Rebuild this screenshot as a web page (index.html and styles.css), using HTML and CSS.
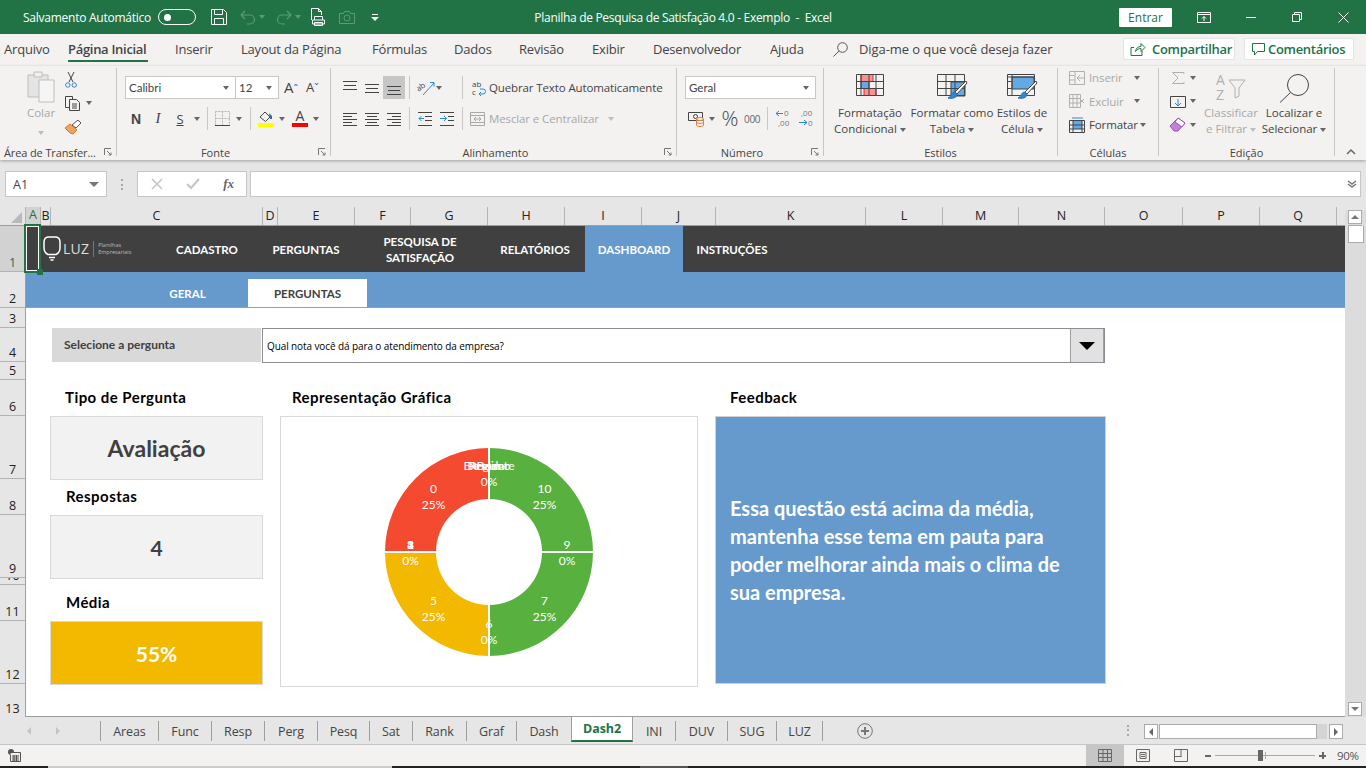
FILE: index.html
```html
<!DOCTYPE html>
<html lang="pt-BR">
<head>
<meta charset="utf-8">
<title>Planilha de Pesquisa de Satisfação 4.0 - Exemplo - Excel</title>
<link rel="stylesheet" href="styles.css">
</head>
<body>
<div class="app">

<header class="titlebar">
  <div class="qat">
    <span class="autosave">Salvamento Automático</span>
    <span class="toggle"><span class="toggle-dot"></span></span>
    <svg class="i qat-save" width="16" height="16" viewBox="0 0 16 16" fill="none" stroke="#fff"><path d="M.5.5h12l3 3v12H.5z"/><path d="M3.5.5v5h8v-5M3.5 15.5v-6h9v6"/></svg>
    <svg class="i qat-undo" width="16" height="16" viewBox="0 0 16 16" fill="none" stroke="#5c9a78" stroke-width="1.2"><path d="M1 6h9a4.5 4.5 0 0 1 0 9H7M1 6l4-4M1 6l4 4"/></svg>
    <span class="caret caret-dim qat-c1"></span>
    <svg class="i qat-redo" width="16" height="16" viewBox="0 0 16 16" fill="none" stroke="#5c9a78" stroke-width="1.2"><path d="M15 6H6a4.5 4.5 0 0 0 0 9h3M15 6l-4-4M15 6l-4 4"/></svg>
    <span class="caret caret-dim qat-c2"></span>
    <svg class="i qat-print" width="15" height="18" viewBox="0 0 15 18" fill="none" stroke="#fff"><path d="M.5 12V.5h7l3 3V7M7.5.5v3h3"/><path d="M3.5 12V8.500h8V12M1.500 12h12v4h-12zM3.500 14.500h8v3h-8z" fill="#217346"/></svg>
    <svg class="i qat-cam" width="16" height="13" viewBox="0 0 16 13" fill="none" stroke="#5c9a78"><path d="M.5 2.500h4l1-2h5l1 2h4v10H.5z"/><circle cx="8" cy="7" r="3"/></svg>
    <svg class="i qat-more" width="8" height="7" viewBox="0 0 8 7" fill="#fff"><path d="M1 0h6v1H1zM0 3h8L4 7z"/></svg>
  </div>
  <div class="doc-title">Planilha de Pesquisa de Satisfação 4.0 - Exemplo&nbsp; -&nbsp; Excel</div>
  <div class="win">
    <span class="signin">Entrar</span>
    <svg class="i win-opts" width="14" height="11" viewBox="0 0 14 11" fill="none" stroke="#fff"><path d="M.5.500h13v10H.5zM.5 2.500h13M7 9V4.500M5 6.500l2-2 2 2"/></svg>
    <svg class="i win-min" width="10" height="1" viewBox="0 0 10 1"><path d="M0 0h10v1H0z" fill="#fff"/></svg>
    <svg class="i win-max" width="10" height="10" viewBox="0 0 10 10" fill="none" stroke="#fff"><path d="M.5 2.500h7v7h-7zM2.500 2.500v-2h7v7h-2"/></svg>
    <svg class="i win-close" width="11" height="11" viewBox="0 0 11 11" stroke="#fff"><path d="M.5.500l10 10M10.500.500l-10 10"/></svg>
  </div>
</header>

<nav class="tabstrip">
  <span class="rtab">Arquivo</span>
  <span class="rtab rtab-on">Página Inicial</span>
  <span class="rtab">Inserir</span>
  <span class="rtab">Layout da Página</span>
  <span class="rtab">Fórmulas</span>
  <span class="rtab">Dados</span>
  <span class="rtab">Revisão</span>
  <span class="rtab">Exibir</span>
  <span class="rtab">Desenvolvedor</span>
  <span class="rtab">Ajuda</span>
  <span class="tellme">
    <svg class="i" width="15" height="15" viewBox="0 0 15 15" fill="none" stroke="#555"><circle cx="9.500" cy="5.500" r="4.800"/><path d="M6 9L.5 14.500"/></svg>
    <span>Diga-me o que você deseja fazer</span>
  </span>
  <span class="share">
    <span class="sbtn sbtn-a"><svg class="i" width="16" height="14" viewBox="0 0 16 14" fill="none" stroke="#217346"><path d="M1 5.500v8h11V9M1 5.500h3M5.500 9.500C6 6 8 4.500 11 4.500V1.500l4 4-4 4v-3C8.500 6.500 7 7.500 5.500 9.500z"/></svg>Compartilhar</span>
    <span class="sbtn sbtn-b"><svg class="i" width="13" height="13" viewBox="0 0 13 13" fill="none" stroke="#217346"><path d="M.5.500h12v8H5.500l-3 3.500V8.500H.5z"/></svg>Comentários</span>
  </span>
</nav>

<section class="ribbon">
  <div class="grp g1">
    <div class="body flexrow">
      <div class="paste">
        <svg class="i" width="28" height="32" viewBox="0 0 28 32" fill="none"><path d="M1 4h20v22H1z" fill="#e4e4e4" stroke="#bdbdbd"/><path d="M7 1h8v5H7z" fill="#efefef" stroke="#bdbdbd"/><path d="M12 9h15v22H12z" fill="#f5f5f5" stroke="#bdbdbd"/></svg>
        <span class="dim">Colar</span>
        <span class="caret caret-lt"></span>
      </div>
      <div class="stack">
        <svg class="i" width="12" height="16" viewBox="0 0 12 16" fill="none" stroke="#444"><path d="M3 0l5 10M9 0L4 10"/><circle cx="2.800" cy="13" r="2.200" stroke="#2b88d8"/><circle cx="9.200" cy="13" r="2.200" stroke="#2b88d8"/></svg>
        <span class="hrow"><svg class="i" width="16" height="15" viewBox="0 0 16 15" fill="none" stroke="#444"><path d="M.5.500h7v11H.5z"/><path d="M4.500 3.500h7l3 3v8h-10z" fill="#f3f2f1"/><path d="M7 8h5M7 10h5M7 12h5"/></svg><span class="caret c-copy"></span></span>
        <svg class="i" width="17" height="16" viewBox="0 0 17 16"><path d="M0 9l5-4 7 6-4 4-3-1z" fill="#f0a45e" stroke="#d97a2a"/><path d="M7 6l6-5 3 3-5 5z" fill="#fff" stroke="#555"/></svg>
      </div>
    </div>
    <div class="label"><span class="label-left">Área de Transfer...</span><svg class="launch" width="8" height="8" viewBox="0 0 8 8" fill="none" stroke="#777"><path d="M.5 7V.5H7M3 3l4 4M7 4.500V7H4.500"/></svg></div>
  </div>

  <div class="grp g2">
    <div class="body rows">
      <div class="hrow">
        <span class="combo w110">Calibri<span class="caret"></span></span>
        <span class="combo w44">12<span class="caret"></span></span>
        <span class="glyph-a ml5">A<small>ˆ</small></span>
        <span class="glyph-a glyph-sm ml5">A<small>ˇ</small></span>
      </div>
      <div class="hrow">
        <span class="btn w22 b-n">N</span>
        <span class="btn w22 b-i">I</span>
        <span class="btn w22 b-s">S</span>
        <span class="btn w12"><span class="caret"></span></span>
        <span class="vsep ml4"></span>
        <svg class="i ml7" width="15" height="15" viewBox="0 0 15 15" fill="none" stroke="#b5b5b5" stroke-dasharray="2 1"><path d="M.5.500h14v14H.5zM7.500.500v14M.5 7.500h14"/><path d="M0 14.500h15" stroke="#444" stroke-dasharray="none"/></svg>
        <span class="btn w18"><span class="caret"></span></span>
        <span class="vsep ml2"></span>
        <svg class="i ml7" width="16" height="17" viewBox="0 0 16 17"><path d="M2 7l5-5 5 5-4.500 4.500z" fill="none" stroke="#444"/><path d="M11 3l3 3v3h-2z" fill="#2b6fb3"/><path d="M0 13h16v4H0z" fill="#ffff00"/></svg>
        <span class="btn w16"><span class="caret"></span></span>
        <span class="font-a ml2">A</span>
        <span class="btn w16"><span class="caret"></span></span>
      </div>
    </div>
    <div class="label"><span class="label-c">Fonte</span><svg class="launch" width="8" height="8" viewBox="0 0 8 8" fill="none" stroke="#777"><path d="M.5 7V.5H7M3 3l4 4M7 4.500V7H4.500"/></svg></div>
  </div>

  <div class="grp g3">
    <div class="body rows">
      <div class="hrow">
        <svg class="i al" width="14" height="14" viewBox="0 0 14 14" stroke="#444"><path d="M0 1.500h14M1 5.500h12M0 9.500h14" transform="translate(0 -1)"/></svg>
        <svg class="i al ml8" width="14" height="14" viewBox="0 0 14 14" stroke="#444"><path d="M0 3.500h14M1 7.500h12M0 11.500h14"/></svg>
        <span class="btn-on ml4"><svg class="i" width="14" height="14" viewBox="0 0 14 14" stroke="#444"><path d="M0 5.500h14M1 9.500h12M0 13.500h14"/></svg></span>
        <span class="vsep ml4"></span>
        <svg class="i ml7" width="18" height="16" viewBox="0 0 18 16" fill="none" stroke="#444"><text x="0" y="9" class="mini" transform="rotate(-35 5 8)">ab</text><path d="M6 15L17 3M13 2.500h4v4" stroke="#2b88d8"/></svg>
        <span class="btn w8"><span class="caret"></span></span>
        <span class="vsep ml19"></span>
        <svg class="i ml9" width="14" height="16" viewBox="0 0 14 16" fill="none" stroke="#2b88d8"><text x="0" y="7" class="mini">ab</text><text x="0" y="15" class="mini">c</text><path d="M7 14h4a2.500 2.500 0 0 0 0-5H8M7 14l2-2M7 14l2 2"/></svg>
        <span class="tx ml3">Quebrar Texto Automaticamente</span>
      </div>
      <div class="hrow">
        <svg class="i" width="14" height="14" viewBox="0 0 14 14" stroke="#444"><path d="M0 1.500h14M0 4.500h9M0 7.500h14M0 10.500h9M0 13.500h14"/></svg>
        <svg class="i ml8" width="14" height="14" viewBox="0 0 14 14" stroke="#444"><path d="M0 1.500h14M2 4.500h10M0 7.500h14M2 10.500h10M0 13.500h14"/></svg>
        <svg class="i ml8" width="14" height="14" viewBox="0 0 14 14" stroke="#444"><path d="M0 1.500h14M5 4.500h9M0 7.500h14M5 10.500h9M0 13.500h14"/></svg>
        <span class="vsep ml8"></span>
        <svg class="i ml8" width="14" height="14" viewBox="0 0 14 14" fill="none" stroke="#444"><path d="M0 .500h14M7 4.500h7M7 8.500h7M0 13.500h14"/><path d="M6 6.500H1M3.500 4l-2.500 2.500L3.500 9" stroke="#2b88d8"/></svg>
        <svg class="i ml8" width="14" height="14" viewBox="0 0 14 14" fill="none" stroke="#444"><path d="M0 .500h14M8 4.500h6M8 8.500h6M0 13.500h14"/><path d="M0 6.500h6M4 4l2.500 2.500L4 9" stroke="#2b88d8"/></svg>
        <span class="vsep ml8"></span>
        <svg class="i ml7" width="15" height="14" viewBox="0 0 15 14" fill="none" stroke="#a8a8a8"><path d="M.5.500h14v13H.5zM.5 3.500h14M.5 10.500h14M4 7h7M4 7l2-2M4 7l2 2M11 7L9 5M11 7L9 9"/></svg>
        <span class="tx dim ml4">Mesclar e Centralizar</span>
        <span class="caret caret-lt ml9"></span>
      </div>
    </div>
    <div class="label"><span class="label-c">Alinhamento</span><svg class="launch" width="8" height="8" viewBox="0 0 8 8" fill="none" stroke="#777"><path d="M.5 7V.5H7M3 3l4 4M7 4.500V7H4.500"/></svg></div>
  </div>

  <div class="grp g4">
    <div class="body rows">
      <div class="hrow"><span class="combo w130">Geral<span class="caret"></span></span></div>
      <div class="hrow">
        <svg class="i ml3" width="16" height="17" viewBox="0 0 16 17" fill="none" stroke="#444"><path d="M.5 2.500h14v8H.5z"/><circle cx="7.500" cy="6.500" r="2"/><g stroke="#ed7d31"><ellipse cx="12" cy="9" rx="3.500" ry="1.500" fill="#f3f2f1"/><path d="M8.500 9v6c0 2 7 2 7 0V9M8.500 12c0 2 7 2 7 0"/></g></svg>
        <span class="btn w16"><span class="caret"></span></span>
        <span class="pct ml2">%</span>
        <span class="thousand ml6">000</span>
        <span class="vsep ml7"></span>
        <svg class="i ml7" width="16" height="17" viewBox="0 0 16 17" fill="none" stroke="#2b88d8"><path d="M8 3.500H1M4 1L1 3.500 4 6"/><text x="9" y="6" class="mini mini-g">0</text><text x="3" y="16" class="mini mini-g">,00</text></svg>
        <svg class="i ml7" width="16" height="17" viewBox="0 0 16 17" fill="none" stroke="#2b88d8"><path d="M1 12.500h8M6 10l3 2.500L6 15"/><text x="3" y="6" class="mini mini-g">,00</text><text x="10" y="16" class="mini mini-g">0</text></svg>
      </div>
    </div>
    <div class="label"><span class="label-c">Número</span><svg class="launch" width="8" height="8" viewBox="0 0 8 8" fill="none" stroke="#777"><path d="M.5 7V.5H7M3 3l4 4M7 4.500V7H4.500"/></svg></div>
  </div>

  <div class="grp g5">
    <div class="body flexrow">
      <div class="big b72">
        <svg class="i" width="28" height="22" viewBox="0 0 28 22" fill="none" stroke="#444"><path d="M5 .500h12v7H5zM8 14.500h12v7H8z" fill="#ff8f8f" stroke="#c8323c"/><path d="M5 7.500h8v7H5z" fill="#63a9e6"/><path d="M.500.500h27v21H.500zM.5 7.500h27M.5 14.500h27M5 .500v21M13 .500v21M20 .500v21"/></svg>
        <span>Formatação</span><span>Condicional<i class="caret cap"></i></span>
      </div>
      <div class="big b92">
        <svg class="i" width="30" height="26" viewBox="0 0 30 26" fill="none" stroke="#444"><path d="M14 8h14v14H14z" fill="#63a9e6"/><path d="M.500.500h27v21H.500zM.5 7.500h27M.5 14.500h27M9 .500v21M18 .500v21"/><path d="M29 7L18 18l2 2L30 9z" fill="#fff"/><path d="M17 18c-3 1-2 4-6 6 4 1 9 0 9-4z" fill="#2b88d8" stroke="#2b6fb3"/></svg>
        <span>Formatar como</span><span>Tabela<i class="caret cap"></i></span>
      </div>
      <div class="big b48">
        <svg class="i" width="30" height="26" viewBox="0 0 30 26" fill="none" stroke="#444"><path d="M5 3h22v12H5z" fill="#63a9e6"/><path d="M.500.500h27v21H.500zM.5 7.500h4M.5 14.500h4M5 .500v21M.5 3h27"/><path d="M29 7L18 18l2 2L30 9z" fill="#fff"/><path d="M17 18c-3 1-2 4-6 6 4 1 9 0 9-4z" fill="#2b88d8" stroke="#2b6fb3"/></svg>
        <span>Estilos de</span><span>Célula<i class="caret cap"></i></span>
      </div>
    </div>
    <div class="label"><span class="label-c">Estilos</span></div>
  </div>

  <div class="grp g6">
    <div class="body stack stack-c">
      <span class="hrow"><svg class="i" width="16" height="14" viewBox="0 0 16 14" fill="none" stroke="#b0b0b0"><path d="M.5.500h15v13H.5zM6 .500v13M.5 4.500h5M.5 9h5M8 7h7M8 7l3-3M8 7l3 3"/></svg><span class="tx dim ml4">Inserir</span><span class="caret ml11"></span></span>
      <span class="hrow"><svg class="i" width="16" height="14" viewBox="0 0 16 14" fill="none" stroke="#b0b0b0"><path d="M.5.500h11v13H.5zM4 .500v13M8 .500v13M.5 4.500h11M.5 9h11M11 5l4 4M15 5l-4 4"/></svg><span class="tx dim ml4">Excluir</span><span class="caret ml10"></span></span>
      <span class="hrow"><svg class="i" width="16" height="16" viewBox="0 0 16 16" fill="none" stroke="#444"><path d="M4 4h9v8H4z" fill="#63a9e6" stroke="none"/><path d="M.5 3.500h15v12H.5zM.5 8h15M.5 12h15M4 3.500v12M13 3.500v12"/><path d="M3 1h11" stroke="#2b88d8"/></svg><span class="tx ml4">Formatar</span><span class="caret ml2"></span></span>
    </div>
    <div class="label"><span class="label-c">Células</span></div>
  </div>

  <div class="grp g7">
    <div class="body flexrow">
      <div class="stack stack-e">
        <span class="hrow"><svg class="i ml2" width="12" height="12" viewBox="0 0 12 12" fill="none" stroke="#b0b0b0"><path d="M12 2V.5H.5L6 6 .5 11.500H12V10"/></svg><span class="caret ml6"></span></span>
        <span class="hrow"><svg class="i" width="16" height="14" viewBox="0 0 16 14" fill="none" stroke="#444"><path d="M.5 2.500h15v11H.5z"/><path d="M8 5v7M5 9l3 3 3-3" stroke="#2b88d8"/></svg><span class="caret ml4"></span></span>
        <span class="hrow"><svg class="i" width="16" height="15" viewBox="0 0 16 15"><path d="M0 9l8-8 7 5-7 8H4z" fill="#c183d6" stroke="#a04fbc"/><path d="M5 5l3-4 7 5-3 4z" fill="#fff" stroke="#a04fbc"/></svg><span class="caret ml4"></span></span>
      </div>
      <div class="big b54 dim">
        <svg class="i" width="30" height="28" viewBox="0 0 30 28" fill="none" stroke="#b0b0b0"><text x="0" y="11" class="az">A</text><text x="0" y="26" class="az">Z</text><path d="M13 6h16l-6 8v8l-4 2V14z"/></svg>
        <span>Classificar</span><span>e Filtrar<i class="caret cap caret-lt"></i></span>
      </div>
      <div class="big b66">
        <svg class="i" width="30" height="29" viewBox="0 0 30 29" fill="none" stroke="#444"><circle cx="19" cy="11" r="10.500"/><path d="M11.500 18.500L1 28.500"/></svg>
        <span>Localizar e</span><span>Selecionar<i class="caret cap"></i></span>
      </div>
    </div>
    <div class="label"><span class="label-c">Edição</span></div>
  </div>

  <div class="collapse"><svg class="i" width="10" height="6" viewBox="0 0 10 6" fill="none" stroke="#666" stroke-width="1.500"><path d="M1 5l4-4 4 4"/></svg></div>
</section>

<div class="formula">
  <span class="namebox">A1<span class="caret caret-big"></span></span>
  <span class="dots"></span>
  <span class="fxbox">
    <svg class="i" width="12" height="12" viewBox="0 0 12 12" stroke="#c4c4c4" stroke-width="1.500"><path d="M1 1l10 10M11 1L1 11"/></svg>
    <svg class="i" width="14" height="12" viewBox="0 0 14 12" fill="none" stroke="#c4c4c4" stroke-width="2"><path d="M1 6l4 4 8-9"/></svg>
    <span class="fx">fx</span>
  </span>
  <span class="fbar"><svg class="i" width="10" height="8" viewBox="0 0 10 8" fill="none" stroke="#777" stroke-width="1.500"><path d="M1 1l4 3 4-3M1 4l4 3 4-3"/></svg></span>
</div>

<main class="sheet">
  <div class="corner"><span class="corner-tri"></span></div>
  <div class="colhead">
    <span class="ch ch-on">A</span><span class="ch">B</span><span class="ch">C</span><span class="ch">D</span><span class="ch">E</span><span class="ch">F</span><span class="ch">G</span><span class="ch">H</span><span class="ch">I</span><span class="ch">J</span><span class="ch">K</span><span class="ch">L</span><span class="ch">M</span><span class="ch">N</span><span class="ch">O</span><span class="ch">P</span><span class="ch">Q</span><span class="ch ch-end"></span>
  </div>
  <div class="vscroll vs-top">
    <span class="sbtn-v"><span class="tri-up"></span></span>
    <span class="vthumb"></span>
  </div>

  <div class="rowhead">
    <span class="rh rh-on">1</span><span class="rh">2</span><span class="rh">3</span><span class="rh">4</span><span class="rh">5</span><span class="rh">6</span><span class="rh">7</span><span class="rh">8</span><span class="rh">9</span><span class="rh">10</span><span class="rh">11</span><span class="rh">12</span><span class="rh">13</span>
  </div>

  <div class="cells">
    <div class="topnav">
      <div class="logo">
        <svg class="i" width="18" height="25" viewBox="0 0 18 25" fill="none" stroke="#fff" stroke-width="1.500"><path d="M5 18.500C2 17 1 15 1 12V6c0-3 2-5 5-5h6c3 0 5 2 5 5v6c0 3-1 5-4 6.500z"/><path d="M6 21.500h6M7.500 24h3"/></svg>
        <span class="luz">LUZ</span>
        <span class="logosep"></span>
        <span class="logosub">Planilhas<br>Empresariais</span>
      </div>
      <span class="ni">CADASTRO</span>
      <span class="ni">PERGUNTAS</span>
      <span class="ni">PESQUISA DE SATISFAÇÃO</span>
      <span class="ni ni-rel">RELATÓRIOS</span>
      <span class="ni ni-on">DASHBOARD</span>
      <span class="ni">INSTRUÇÕES</span>
    </div>
    <div class="subnav">
      <span class="si">GERAL</span>
      <span class="si si-on">PERGUNTAS</span>
    </div>
    <div class="a1sel"><span class="a1handle"></span></div>

    <div class="qlabel">Selecione a pergunta</div>
    <div class="qinput"><span class="qtext">Qual nota você dá para o atendimento da empresa?</span><span class="qbtn"><span class="tri-big"></span></span></div>

    <div class="ttl t-tipo">Tipo de Pergunta</div>
    <div class="card c-tipo">Avaliação</div>
    <div class="ttl t-resp">Respostas</div>
    <div class="card c-resp">4</div>
    <div class="ttl t-media">Média</div>
    <div class="card c-media">55%</div>

    <div class="ttl t-graf">Representação Gráfica</div>
    <div class="chart">
      <svg class="i" width="210" height="210" viewBox="0 0 210 210">
        <path d="M105 1A104 104 0 0 1 209 105H158A53 53 0 0 0 105 52z" fill="#58b13f"/>
        <path d="M209 105A104 104 0 0 1 105 209V158A53 53 0 0 0 158 105z" fill="#58b13f"/>
        <path d="M105 209A104 104 0 0 1 1 105H52A53 53 0 0 0 105 158z" fill="#f3b800"/>
        <path d="M1 105A104 104 0 0 1 105 1V52A53 53 0 0 0 52 105z" fill="#f44a30"/>
        <path d="M105 0v52M105 158v52M0 105h52M158 105h52" stroke="#fff" stroke-width="2"/>
        <g class="dl">
          <text x="160.500" y="46">10</text><text x="160.500" y="62">25%</text>
          <text x="160.500" y="158">7</text><text x="160.500" y="174">25%</text>
          <text x="49.500" y="158">5</text><text x="49.500" y="174">25%</text>
          <text x="49.500" y="46">0</text><text x="49.500" y="62">25%</text>
          <text x="105" y="23">Excelente</text><text x="105" y="23">Regular</text><text x="105" y="23">Péssimo</text><text x="105" y="23">Bom</text><text x="105" y="39">0%</text>
          <text x="183" y="102">9</text><text x="183" y="118">0%</text>
          <text x="105" y="181">6</text><text x="105" y="197">0%</text>
          <text x="26.500" y="102">1</text><text x="26.500" y="102">2</text><text x="26.500" y="102">3</text><text x="26.500" y="102">4</text><text x="26.500" y="118">0%</text>
        </g>
      </svg>
    </div>

    <div class="ttl t-feed">Feedback</div>
    <div class="feedback">Essa questão está acima da média, mantenha esse tema em pauta para poder melhorar ainda mais o clima de sua empresa.</div>
  </div>

  <div class="vscroll vs-body">
    <span class="sbtn-v"><span class="tri-down"></span></span>
  </div>
</main>

<footer class="tabsbar">
  <span class="navarrows"><span class="tri-left"></span><span class="tri-right"></span></span>
  <span class="stab st-areas">Areas</span>
  <span class="stab st-func">Func</span>
  <span class="stab st-func">Resp</span>
  <span class="stab st-func">Perg</span>
  <span class="stab st-pesq">Pesq</span>
  <span class="stab st-sat">Sat</span>
  <span class="stab st-rank">Rank</span>
  <span class="stab st-graf">Graf</span>
  <span class="stab st-dash">Dash</span>
  <span class="stab stab-on">Dash2</span>
  <span class="stab st-ini">INI</span>
  <span class="stab st-pesq">DUV</span>
  <span class="stab st-sug">SUG</span>
  <span class="stab st-luz">LUZ</span>
  <svg class="i addsheet" width="16" height="16" viewBox="0 0 16 16" fill="none" stroke="#777"><circle cx="8" cy="8" r="7.300"/><path d="M4 8h8M8 4v8" stroke-width="2"/></svg>
  <span class="dots dots-h"></span>
  <span class="hscroll">
    <span class="hbtn hbtn-l"><span class="tri-left tri-dark"></span></span>
    <span class="hthumb"></span>
    <span class="htrack"></span>
    <span class="hbtn"><span class="tri-right tri-dark"></span></span>
  </span>
</footer>

<div class="status">
  <svg class="i macro" width="13" height="13" viewBox="0 0 13 13"><circle cx="3" cy="3" r="3" fill="#555"/><path d="M3 3.500h9.500v9h-10V6" fill="#f3f2f1" stroke="#555"/><path d="M4 7h7M4 9h7M4 11h7M6 6v6M8.500 6v6" stroke="#555"/></svg>
  <span class="status-right">
    <span class="view view-on"><svg class="i" width="14" height="13" viewBox="0 0 14 13" fill="none" stroke="#666"><path d="M.5.500h13v12H.5zM.5 4.500h13M.5 8.500h13M5 .500v12M9.500 .500v12"/></svg></span>
    <span class="view"><svg class="i" width="14" height="13" viewBox="0 0 14 13" fill="none" stroke="#666"><path d="M.5.500h13v12H.5zM4 3.500h6v6H4zM5 5.500h4M5 7.500h4"/></svg></span>
    <span class="view"><svg class="i" width="14" height="13" viewBox="0 0 14 13" fill="none" stroke="#666"><path d="M.5.500h13v12H.5zM.5 7.500h7M7 .500v7"/></svg></span>
    <span class="zminus"></span>
    <span class="zslider"><span class="zthumb"></span></span>
    <span class="zplus"></span>
    <span class="zpct">90%</span>
  </span>
</div>
<div class="taskbar"><span class="tb-a"></span><span class="tb-b"></span><span class="tb-a tb-c"></span><span class="tb-d"></span><span class="tb-a tb-e"></span></div>

</div>
</body>
</html>
```

FILE: styles.css
```css
:root {
  --ui: "Open Sans", "Noto Sans", sans-serif;
  --cal: "Lato", "Open Sans", sans-serif;
  --ink: #444;
  --dim: #a8a8a8;
  --green: #217346;
  --blue: #6699cc;
  --dark: #404040;
  --chrome: #f3f2f1;
  --gray: #e6e6e6;
  --cols: 15px 10px 212px 15px 77px 56px 77px 77px 77px 74px 150px 77px 76px 86px 78px 77px 77px 8px;
}
* { box-sizing: border-box; }
html, body { margin: 0; height: 100%; overflow: hidden; }
body { background: var(--gray); font-family: var(--ui); font-size: 12px; color: var(--ink); }
.app { width: 1366px; height: 768px; display: flex; flex-direction: column; overflow: hidden; }
.i { display: block; flex: none; overflow: visible; }
.mini { font: 8px var(--ui); fill: #444; stroke: none; }
.mini-g { fill: #777; }
.az { font: 14px var(--ui); fill: #b0b0b0; stroke: none; }

/* utility spacing */
.ml2 { margin-left: 2px; } .ml3 { margin-left: 3px; } .ml4 { margin-left: 4px; } .ml5 { margin-left: 5px; }
.ml6 { margin-left: 6px; } .ml7 { margin-left: 7px; } .ml8 { margin-left: 8px; } .ml9 { margin-left: 9px; }
.ml10 { margin-left: 10px; } .ml11 { margin-left: 11px; } .ml19 { margin-left: 19px; }
.w8 { width: 8px; } .w12 { width: 12px; } .w16 { width: 16px; } .w18 { width: 18px; } .w22 { width: 22px; }

.caret { display: inline-block; width: 0; height: 0; border-style: solid; border-width: 4px 3.5px 0; border-color: #666 transparent transparent; flex: none; }
.caret-lt { border-top-color: #bdbdbd; }
.caret-dim { border-top-color: #5c9a78; }
.caret-big { border-width: 5px 5px 0; border-top-color: #777; }
.cap { margin-left: 3px; vertical-align: middle; }

/* title bar */
.titlebar { height: 34px; flex: none; background: var(--green); color: #fff; display: grid; grid-template-columns: 1fr auto 1fr; align-items: center; }
.qat { display: flex; align-items: center; padding-left: 23px; }
.autosave { width: 135px; font-size: 12px; letter-spacing: -.25px; white-space: nowrap; }
.toggle { width: 38px; height: 16px; border: 1px solid #fff; border-radius: 8px; display: flex; align-items: center; padding-left: 5px; }
.toggle-dot { width: 7px; height: 7px; background: #fff; border-radius: 50%; }
.qat-save { margin-left: 15px; }
.qat-undo { margin-left: 13px; }
.qat-c1 { margin-left: 3px; }
.qat-redo { margin-left: 11px; }
.qat-c2 { margin-left: 3px; }
.qat-print { margin-left: 10px; }
.qat-cam { margin-left: 13px; }
.qat-more { margin-left: 16px; }
.doc-title { font-size: 12px; letter-spacing: -.3px; white-space: nowrap; }
.win { display: flex; align-items: center; justify-content: flex-end; }
.signin { width: 53px; height: 19px; background: #fff; color: var(--green); display: flex; align-items: center; justify-content: center; border-radius: 1px; }
.win-opts { margin-left: 25px; }
.win-min { margin-left: 35px; }
.win-max { margin-left: 36px; }
.win-close { margin-left: 36px; margin-right: 17px; }

/* ribbon tabs */
.tabstrip { height: 32px; flex: none; background: var(--chrome); display: grid; grid-template-columns: 64px 107px 66px 131px 82px 65px 73px 61px 117px 63px 1fr; padding-left: 4px; align-items: center; font-size: 13px; }
.rtab { height: 32px; display: flex; align-items: center; padding-bottom: 2px; white-space: nowrap; letter-spacing: -.2px; position: relative; }
.rtab-on { font-weight: 600; letter-spacing: -.3px; }
.rtab-on::after { content: ""; position: absolute; left: 0; width: 80px; bottom: 4px; height: 2px; background: var(--green); }
.tellme { display: flex; align-items: center; gap: 11px; padding-bottom: 2px; white-space: nowrap; letter-spacing: -.08px; }
.share { position: absolute; left: 1123px; top: 38px; display: flex; gap: 9px; }
.sbtn { height: 22px; background: #fff; border: 1px solid #e4e4e4; border-radius: 2px; color: var(--green); display: flex; align-items: center; font-size: 13px; font-weight: 600; letter-spacing: -.3px; white-space: nowrap; }
.sbtn-a { width: 112px; padding-left: 6px; gap: 6px; }
.sbtn-b { width: 110px; padding-left: 7px; gap: 3px; }

/* ribbon body */
.ribbon { height: 94px; flex: none; background: var(--chrome); display: flex; padding-top: 2px; box-shadow: 0 1px 3px rgba(0,0,0,.3); position: relative; z-index: 2; font-size: 11.500px; }
.grp { display: flex; flex-direction: column; height: 88px; border-right: 1px solid #c6c6c6; flex: none; }
.g1 { width: 117px; } .g2 { width: 214px; padding-left: 8px; } .g3 { width: 346px; padding-left: 12px; } .g4 { width: 147px; padding-left: 8px; }
.g5 { width: 234px; padding-left: 10px; } .g6 { width: 101px; padding-left: 11px; } .g7 { width: 176px; padding-left: 11px; }
.body { flex: 1; min-height: 0; }
.flexrow { display: flex; }
.rows { display: grid; grid-template-rows: 23px 23px; row-gap: 8px; padding-top: 8px; }
.stack { display: grid; grid-auto-rows: 23.500px; align-items: center; }
.stack-c { width: 90px; align-content: start; margin-top: -2px; }
.stack-e { width: 34px; flex: none; margin-top: -2px; align-content: start; }
.g1 .stack { margin-left: 6px; align-content: start; }
.hrow { display: flex; align-items: center; white-space: nowrap; }
.label { height: 14px; display: flex; align-items: center; font-size: 11px; white-space: nowrap; margin-bottom: -3px; }
.g2 .label { margin-left: -8px; } .g3 .label { margin-left: -12px; } .g4 .label { margin-left: -8px; }
.g5 .label { margin-left: -10px; } .g6 .label { margin-left: -11px; } .g7 .label { margin-left: -11px; }
.label-c { flex: 1; text-align: center; }
.label-left { flex: 1; padding-left: 4px; letter-spacing: -.12px; }
.launch { flex: none; margin: 0 4px; }
.dim { color: var(--dim); }
.paste { width: 36px; margin-left: 23px; padding-top: 3px; display: flex; flex-direction: column; align-items: center; flex: none; }
.paste span.dim { margin-top: 2px; line-height: 16px; }
.paste .caret { margin-top: 10px; }
.c-copy { margin-left: 5px; }
.combo { height: 23px; background: #fff; border: 1px solid #c8c8c8; display: flex; align-items: center; justify-content: space-between; padding: 0 6px 0 3px; font-family: var(--cal); font-size: 11.500px; flex: none; }
.w110 { width: 111px; } .w44 { width: 44px; margin-left: -1px; } .w130 { width: 131px; }
.glyph-a { font-size: 15px; line-height: 1; width: 17px; }
.glyph-a small { font-size: 11px; color: #2b6fb3; }
.glyph-sm { font-size: 13px; }
.btn { display: flex; align-items: center; justify-content: center; flex: none; }
.b-n { font-family: "Liberation Sans", sans-serif; font-weight: 700; font-size: 14px; }
.b-i { font-family: "Liberation Serif", serif; font-style: italic; font-size: 15px; }
.b-s { text-decoration: underline; font-size: 13px; }
.vsep { width: 1px; height: 23px; background: #c8c8c8; flex: none; }
.font-a { width: 16px; height: 17px; font-size: 14px; line-height: 12px; text-align: center; border-bottom: 4px solid #f00; flex: none; }
.btn-on { width: 22px; height: 23px; background: #c6c6c6; display: flex; align-items: center; justify-content: center; flex: none; }
.tx { white-space: nowrap; letter-spacing: -.12px; }
.pct { font-size: 21px; font-weight: 300; line-height: 1; width: 16px; display: flex; justify-content: center; }
.thousand { font-size: 10px; width: 16px; color: #666; text-align: center; letter-spacing: -.3px; }
.big { display: flex; flex-direction: column; align-items: center; flex: none; line-height: 16px; white-space: nowrap; height: 69px; }
.big .i { margin-top: 6px; margin-bottom: auto; }
.big span { display: block; }
.b72 { width: 72px; } .b92 { width: 92px; } .b48 { width: 48px; } .b54 { width: 54px; } .b66 { width: 66px; margin-left: 3px; }
.collapse { flex: 1; display: flex; align-items: flex-end; justify-content: center; padding-bottom: 5px; }

/* formula bar */
.formula { height: 37px; flex: none; padding: 11px 5px 0; display: flex; align-items: stretch; background: var(--gray); }
.namebox { width: 102px; background: #fff; border: 1px solid #c6c6c6; display: flex; align-items: center; justify-content: space-between; padding: 0 7px; font-size: 12.500px; }
.dots { width: 2px; height: 11px; margin: auto 0; background: repeating-linear-gradient(#a8a8a8 0 2px, transparent 2px 4.500px); }
.formula .dots { margin-left: 14px; }
.fxbox { width: 110px; margin-left: 14px; background: #fff; border: 1px solid #c6c6c6; display: flex; align-items: center; justify-content: space-between; padding: 0 12px 0 13px; }
.fx { font: italic 700 13px "Liberation Serif", serif; color: #666; }
.fbar { flex: 1; margin-left: 3px; background: #fff; border: 1px solid #c6c6c6; display: flex; align-items: center; justify-content: flex-end; padding-right: 3px; }

/* sheet */
.sheet { flex: none; height: 520px; display: grid; grid-template-columns: 26px 1319px 21px; grid-template-rows: 29px 491px; background: var(--gray); }
.corner { border-bottom: 1px solid #9e9e9e; border-right: 1px solid #b4b4b4; position: relative; margin-top: 10px; }
.corner-tri { position: absolute; right: 3px; bottom: 2px; width: 0; height: 0; border-style: solid; border-width: 0 0 11px 11px; border-color: transparent transparent #b9b9b9; }
.colhead { display: grid; grid-template-columns: var(--cols); margin-top: 10px; border-bottom: 1px solid #9e9e9e; }
.ch { border-right: 1px solid #b4b4b4; display: flex; align-items: center; justify-content: center; color: #222; font-size: 12.500px; line-height: 1; }
.ch-on { background: #d2d2d2; color: var(--green); border-bottom: 2px solid var(--green); margin-bottom: -1px; }
.ch-end { border-right: 0; }
.vscroll { display: flex; flex-direction: column; align-items: center; }
.vs-top { padding: 13px 4px 0 3px; gap: 1px; background: linear-gradient(var(--gray) 13px, #dcdcdc 13px); }
.vs-body { justify-content: flex-end; background: #dcdcdc; padding: 0 4px 1px 3px; position: relative; }
.vs-top .vthumb { width: 14px; height: 3px; border: 1px solid #ababab; border-bottom: 0; background: #fff; }
.sbtn-v { width: 14px; height: 14px; background: #fff; border: 1px solid #ababab; display: flex; align-items: center; justify-content: center; flex: none; }
.tri-up { width: 0; height: 0; border-style: solid; border-width: 0 4px 4px; border-color: transparent transparent #777; }
.tri-down { width: 0; height: 0; border-style: solid; border-width: 4px 4px 0; border-color: #777 transparent transparent; }
.vs-body::before { content: ""; position: absolute; left: 3px; top: 0; width: 14px; height: 16px; background: #fff; border: 1px solid #ababab; border-top: 0; }

.rowhead { display: grid; grid-template-rows: 46px 36px 20px 34px 18px 36px 63px 36px 63px 7px 36px 63px 33px; border-right: 1px solid #9e9e9e; overflow: hidden; }
.rh { border-bottom: 1px solid #b4b4b4; display: flex; align-items: flex-end; justify-content: center; font-size: 12.500px; line-height: 15px; color: #222; overflow: hidden; padding-bottom: 1px; }
.rh-on { background: #d2d2d2; color: var(--green); }
.rh:last-child { border-bottom: 0; }

.cells { background: #fff; display: grid; grid-template-columns: var(--cols); grid-template-rows: 46px 36px 20px 34px 18px 36px 63px 36px 63px 7px 36px 63px 33px; border-bottom: 1px solid #9e9e9e; position: relative; }

.topnav { grid-column: 1 / -1; grid-row: 1; background: var(--dark); display: grid; grid-template-columns: 134px 94px 104px 124px 103px 98px 98px; color: #fff; font-family: var(--cal); font-weight: 700; font-size: 11.500px; }
.ni { display: flex; align-items: center; justify-content: center; text-align: center; line-height: 16px; padding: 1px 0 0; white-space: nowrap; }
.ni:nth-child(4) { padding: 1px 20px 0; white-space: normal; }
.ni-rel { padding-left: 3px; }
.ni-on { background: var(--blue); }
.logo { display: flex; align-items: center; padding-left: 17px; padding-bottom: 1px; font-weight: 400; white-space: nowrap; }
.luz { margin-left: 2px; font-family: var(--ui); font-size: 14px; color: #ddd; letter-spacing: .2px; }
.logosep { width: 1px; height: 16px; background: #777; margin: 0 4px; }
.logosub { font-size: 5.500px; line-height: 7px; color: #bbb; font-family: var(--ui); }

.subnav { grid-column: 1 / -1; grid-row: 2; background: var(--blue); display: flex; align-items: flex-end; padding-left: 101px; border-bottom: 1px solid #9e9e9e; font-family: var(--cal); font-weight: 700; font-size: 11.500px; color: #fff; }
.si { height: 28px; width: 121px; display: flex; align-items: center; justify-content: center; }
.si-on { width: 119px; background: #fff; color: var(--dark); }

.a1sel { grid-column: 1; grid-row: 1; z-index: 3; margin: -2px 0 -1px -2px; border: 2px solid var(--green); position: relative; box-shadow: inset 0 0 0 1px #fff; }
.a1handle { position: absolute; right: -4px; bottom: -4px; width: 6px; height: 6px; background: var(--green); }

.qlabel { grid-column: 3; grid-row: 4; margin: 0 2px 0 1px; background: #d9d9d9; display: flex; align-items: center; padding: 0 0 2px 12px; font-family: var(--cal); font-weight: 700; font-size: 12px; color: #404040; }
.qinput { grid-column: 4 / 15; grid-row: 4; margin: 0 0 -1px -1px; background: #fff; border: 1px solid #8c8c94; display: flex; align-items: center; justify-content: space-between; padding-left: 4px; }
.qtext { font-family: var(--ui); font-size: 10px; color: #000; letter-spacing: -.1px; padding-top: 1px; }
.qbtn { width: 34px; height: 100%; background: #e1e1e1; border-left: 1px solid #a0a0a0; border-right: 1px solid #a0a0a0; display: flex; align-items: center; justify-content: center; }
.tri-big { width: 0; height: 0; border-style: solid; border-width: 8px 8.500px 0; border-color: #000 transparent transparent; }

.ttl { font-family: var(--cal); font-weight: 700; font-size: 15px; letter-spacing: .45px; color: #000; display: flex; align-items: center; white-space: nowrap; padding-bottom: 2px; }
.t-tipo { grid-column: 3; grid-row: 6; padding-left: 14px; }
.t-resp { grid-column: 3; grid-row: 8; padding-left: 15px; }
.t-media { grid-column: 3; grid-row: 11; padding-left: 15px; }
.t-graf { grid-column: 5 / 10; grid-row: 6; padding-left: 14px; }
.t-feed { grid-column: 11 / 13; grid-row: 6; padding-left: 14px; }

.card { grid-column: 3; margin: 0 0 -1px -1px; background: #f2f2f2; border: 1px solid #d9d9d9; display: flex; align-items: center; justify-content: center; font-family: var(--cal); font-weight: 700; font-size: 21px; color: #404040; }
.c-tipo { grid-row: 7; font-size: 23px; }
.c-resp { grid-row: 9; }
.c-media { grid-row: 12; background: #f3b800; color: #fff; }

.chart { grid-column: 5 / 11; grid-row: 7 / 13; margin: 0 18px -3px 2px; border: 1px solid #d9d9d9; background: #fff; display: flex; align-items: center; justify-content: center; }
.dl text { font-family: var(--cal); font-size: 12px; fill: #fff; text-anchor: middle; }

.feedback { grid-column: 11 / 15; grid-row: 7 / 13; margin: 0 -1px 0 -1px; background: var(--blue); border: 1px solid #d0d0d0; display: flex; align-items: center; padding: 0 14px; font-family: var(--cal); font-weight: 700; font-size: 20px; line-height: 28px; color: #fff; }

/* sheet tabs */
.tabsbar { height: 28px; flex: none; background: var(--gray); display: flex; align-items: flex-start; position: relative; border-bottom: 1px solid #c6c6c6; font-size: 12.500px; letter-spacing: -.1px; }
.navarrows { width: 100px; height: 27px; display: flex; align-items: center; gap: 25px; padding-left: 27px; }
.tri-left { width: 0; height: 0; border-style: solid; border-width: 4px 4px 4px 0; border-color: transparent #c4c4c4 transparent transparent; }
.tri-right { width: 0; height: 0; border-style: solid; border-width: 4px 0 4px 4px; border-color: transparent transparent transparent #c4c4c4; }
.tri-dark { border-color: transparent #666 transparent transparent; }
.tri-right.tri-dark { border-color: transparent transparent transparent #666; }
.stab { height: 20px; margin-top: 4px; border-left: 1px solid #9e9e9e; display: flex; align-items: center; justify-content: center; flex: none; }
.st-areas { width: 58px; } .st-func { width: 53px; } .st-pesq { width: 52px; } .st-sat { width: 43px; } .st-rank { width: 54px; }
.st-graf { width: 50px; } .st-dash { width: 55px; } .st-ini { width: 42px; } .st-sug { width: 49px; } .st-luz { width: 47px; border-right: 1px solid #9e9e9e; }
.stab-on { width: 62px; height: 25px; margin-top: 0; background: #fff; border: 1px solid #9e9e9e; border-top: 0; border-bottom: 2px solid var(--green); color: var(--green); font-weight: 700; }
.stab-on + .stab { border-left: 0; }
.addsheet { margin: 6px 0 0 34px; }
.dots-h { position: absolute; left: 1127px; top: 8px; margin: 0; }
.hscroll { position: absolute; left: 1144px; top: 7px; display: flex; height: 15px; }
.hbtn { width: 14px; height: 15px; background: #fff; border: 1px solid #ababab; display: flex; align-items: center; justify-content: center; }
.hthumb { width: 158px; height: 15px; background: #fff; border: 1px solid #ababab; margin-left: 1px; }
.htrack { width: 10px; height: 15px; background: #d4d4d4; margin-right: 2px; }

/* status bar */
.status { height: 21px; flex: none; background: var(--chrome); display: flex; align-items: center; justify-content: space-between; padding-left: 8px; }
.status-right { display: flex; align-items: center; height: 21px; }
.view { width: 38px; height: 21px; display: flex; align-items: center; justify-content: center; }
.view-on { background: #c6c6c6; }
.zminus { width: 6px; height: 2px; background: #666; margin-left: 5px; }
.zslider { width: 100px; height: 1px; background: #a8a8a8; margin-left: 4px; position: relative; }
.zslider::after { content: ""; position: absolute; left: 50px; top: -3px; width: 1px; height: 7px; background: #a8a8a8; }
.zthumb { position: absolute; left: 43px; top: -5px; width: 5px; height: 11px; background: #666; }
.zplus { width: 7px; height: 7px; margin-left: 4px; background: linear-gradient(#666, #666) center / 100% 2px no-repeat, linear-gradient(#666, #666) center / 2px 100% no-repeat; }
.zpct { width: 40px; padding-left: 11px; font-size: 11.500px; color: #555; letter-spacing: -.3px; }
.taskbar { height: 2px; flex: none; display: flex; background: #222; }
.tb-a { width: 48px; background: #222; }
.tb-b { width: 344px; background: #ccc; }
.tb-c { width: 248px; }
.tb-d { width: 48px; background: #555; }
.tb-e { flex: 1; }
```
